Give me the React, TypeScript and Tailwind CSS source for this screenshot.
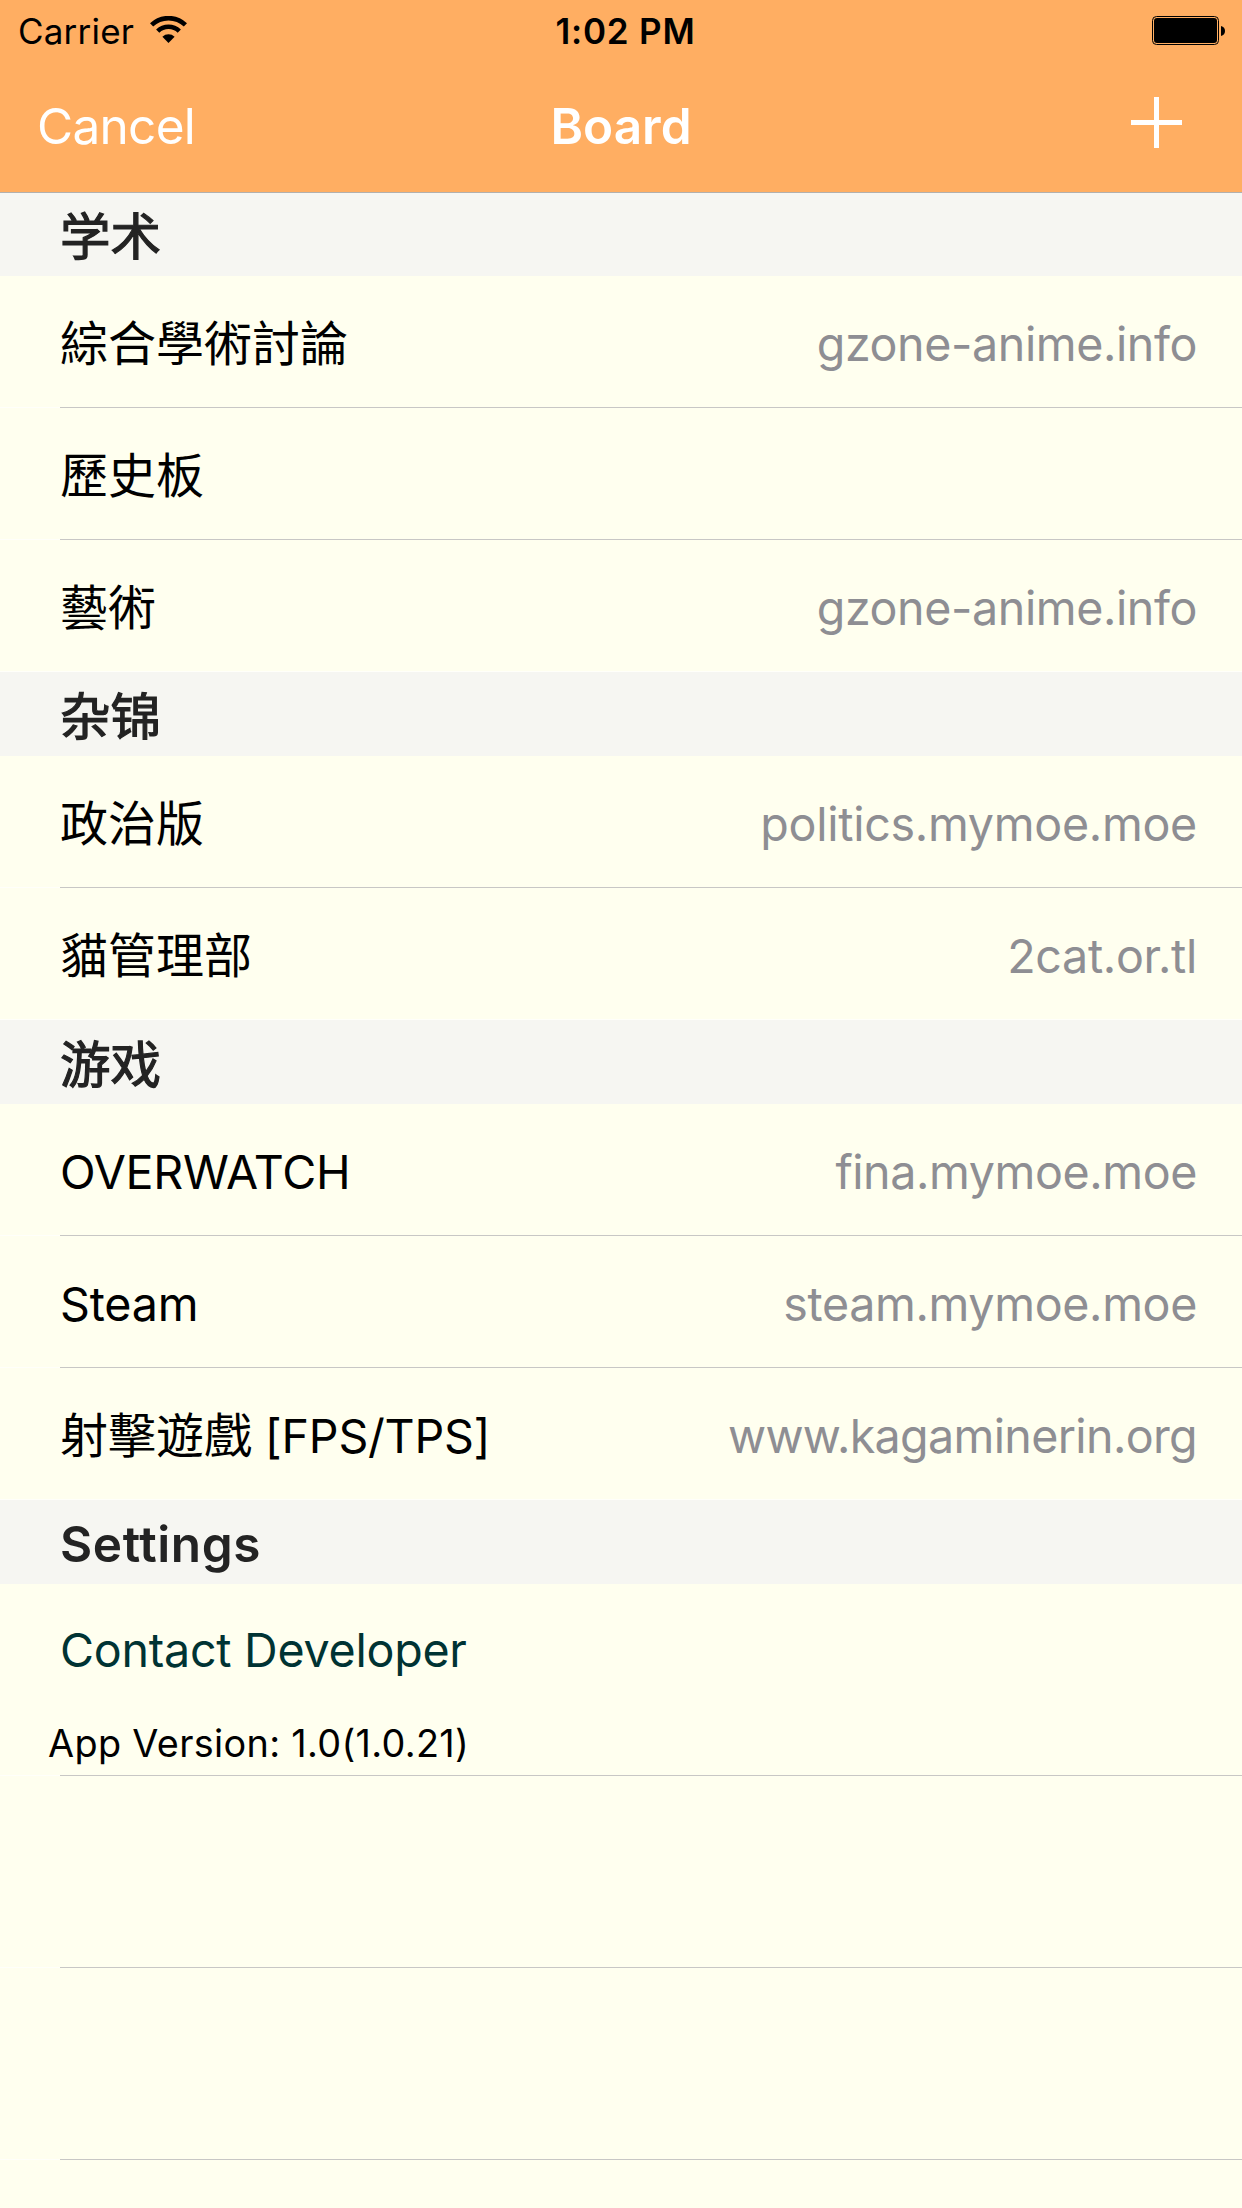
type Board = { cjk?: string; latin?: string; latinTracking?: string; host?: string; hostTracking?: string };

const sections: { title: string; items: Board[] }[] = [
  {
    title: "学术",
    items: [
      { cjk: "綜合學術討論", host: "gzone-anime.info", hostTracking: "tracking-[-0.4px]" },
      { cjk: "歷史板" },
      { cjk: "藝術", host: "gzone-anime.info", hostTracking: "tracking-[-0.4px]" },
    ],
  },
  {
    title: "杂锦",
    items: [
      { cjk: "政治版", host: "politics.mymoe.moe", hostTracking: "tracking-[-0.28px]" },
      { cjk: "貓管理部", host: "2cat.or.tl", hostTracking: "tracking-[-0.3px]" },
    ],
  },
  {
    title: "游戏",
    items: [
      { latin: "OVERWATCH", latinTracking: "tracking-[-0.3px]", host: "fina.mymoe.moe", hostTracking: "tracking-[-0.4px]" },
      { latin: "Steam", latinTracking: "tracking-[-0.2px]", host: "steam.mymoe.moe", hostTracking: "tracking-[-0.35px]" },
      { cjk: "射擊遊戲", latin: " [FPS/TPS]", latinTracking: "tracking-[-0.25px]", host: "www.kagaminerin.org", hostTracking: "tracking-[-0.65px]" },
    ],
  },
];

function SectionHeader({ title, latin = false }: { title: string; latin?: boolean }) {
  return (
    <div className="flex h-[84px] shrink-0 items-center bg-[#f6f6f2] pl-[60px] pt-[4px] text-[49.5px] leading-[60px] text-[#232323]">
      {latin ? (
        <span className="font-semibold tracking-[0.6px]">{title}</span>
      ) : (
        <span className="pt-[2px] text-[50.5px] [-webkit-text-stroke:1.2px_#232323]">{title}</span>
      )}
    </div>
  );
}

function Separator({ visible = true }: { visible?: boolean }) {
  return (
    <div className="flex h-px bg-[#fffffa]">
      {visible && <div className="ml-[60px] h-px flex-1 bg-[#c8c7c5]" />}
    </div>
  );
}

function BoardRow({ board, last }: { board: Board; last: boolean }) {
  return (
    <div className="h-[132px]">
      <div className="flex h-[131px] items-center justify-between pl-[60px] pr-[45px] pt-[5px] text-[46.6px] leading-[60px]">
        <span className="whitespace-pre">
          {board.cjk && <span className="text-[48px]">{board.cjk}</span>}
          {board.latin && <span className={board.latinTracking}>{board.latin}</span>}
        </span>
        {board.host && <span className={`text-[#8e8e93] ${board.hostTracking}`}>{board.host}</span>}
      </div>
      <Separator visible={!last} />
    </div>
  );
}

export default function App() {
  return (
    <div className="flex h-[2208px] w-[1242px] flex-col overflow-hidden bg-[#ffffef] font-['Inter','Noto_Sans_CJK_SC',sans-serif] text-black">
      <div className="z-10 -mb-px h-[193px] shrink-0 border-b border-[#b2b0ae] bg-[#ffae62]">
        <div className="grid h-[60px] grid-cols-3 pl-[18px] pr-[17px] text-[35px] leading-[60px]">
          <div className="flex items-start">
            <span className="w-[132px] pt-[1px] tracking-[0.2px]">Carrier</span>
            <svg className="mt-[16px]" width="37" height="27" viewBox="0 0 37 27" fill="none" stroke="black" strokeWidth="4.6">
              <path d="M1.6 8.9A24.5 24.5 0 0 1 35.4 8.9M7.7 15.2A15.5 15.5 0 0 1 29.3 15.2" />
              <path d="M18.5 27L12.4 20.8A8.7 8.7 0 0 1 24.6 20.8Z" fill="black" stroke="none" />
            </svg>
          </div>
          <span className="pl-[8px] pt-[1px] text-center font-semibold tracking-[0.8px]">1:02 PM</span>
          <svg className="mt-[16px] justify-self-end" width="73" height="29" viewBox="0 0 73 29">
            <rect x="0.5" y="0.5" width="66" height="28" rx="4" fill="none" stroke="black" />
            <rect x="2" y="2" width="63" height="25" rx="3" />
            <path d="M69 10q4 1 4 5t-4 5z" />
          </svg>
        </div>
        <div className="grid h-[132px] grid-cols-3 items-center px-[37px] pb-[1px] text-[49.5px] leading-[60px] text-white">
          <span className="tracking-[-0.7px]">Cancel</span>
          <span className="text-center font-semibold">Board</span>
          <svg className="mb-[6px] mr-[23px] justify-self-end" width="51" height="51" viewBox="0 0 51 51" stroke="white" strokeWidth="5">
            <path d="M0 25.5H51M25.5 0V51" />
          </svg>
        </div>
      </div>
      {sections.map((s) => (
        <div key={s.title} className="shrink-0">
          <SectionHeader title={s.title} />
          {s.items.map((board, i) => (
            <BoardRow key={i} board={board} last={i === s.items.length - 1} />
          ))}
        </div>
      ))}
      <SectionHeader title="Settings" latin />
      <div className="h-[192px] shrink-0">
        <div className="h-[191px] pl-[60px] pt-[36px] leading-[60px]">
          <div className="text-[46.6px] tracking-[-0.25px] text-[#003333]">Contact Developer</div>
          <div className="-ml-[12px] mt-[33px] text-[37.8px] tracking-[0.33px]">App Version: 1.0(1.0.21)</div>
        </div>
        <Separator />
      </div>
      {[0, 1].map((i) => (
        <div key={i} className="shrink-0 pt-[191px]">
          <Separator />
        </div>
      ))}
    </div>
  );
}
